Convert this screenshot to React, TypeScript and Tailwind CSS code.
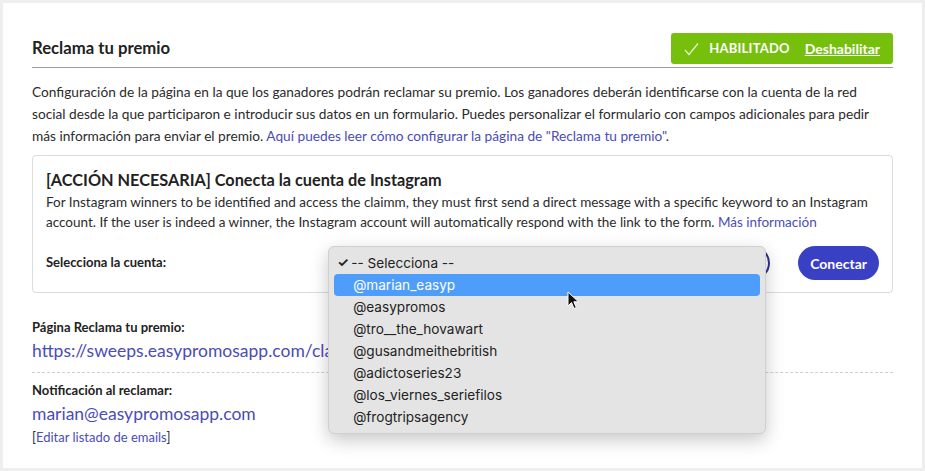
const accounts = [
  '@marian_easyp',
  '@easypromos',
  '@tro__the_hovawart',
  '@gusandmeithebritish',
  '@adictoseries23',
  '@los_viernes_seriefilos',
  '@frogtripsagency',
]

function AccountDropdown() {
  return (
    <div className="absolute left-0 top-0 z-10 w-[438px] rounded-[6px] border border-[#cfcfcf] bg-[#e4e4e4] px-[5px] py-[5px] shadow-[0_6px_18px_rgba(0,0,0,0.22)] font-['Inter',sans-serif] text-[13.6px] text-[#222]">
      <div className="flex h-[22px] items-center gap-[2px] px-[3px]">
        <span className="w-[12px] text-[13px] font-bold">✓</span>
        <span>-- Selecciona --</span>
      </div>
      {accounts.map((a, i) => (
        <div
          key={a}
          className={`flex h-[22px] items-center rounded-[4px] pl-[19px] ${
            i === 0 ? 'bg-[#4f9dfb] text-white' : ''
          }`}
        >
          {a}
        </div>
      ))}
    </div>
  )
}

function Cursor() {
  return (
    <svg className="absolute left-[239px] top-[45px] z-20" width="14" height="20" viewBox="0 0 14 20">
      <path d="M1 1 L1 15 L4.5 11.5 L7 17.5 L9.3 16.5 L6.8 10.8 L11.5 10.8 Z" fill="#111" stroke="#fff" strokeWidth="1" />
    </svg>
  )
}

export default function App() {
  return (
    <div className="w-[925px] h-[471px] bg-[#eeeeee] p-[3px] font-['Lato',sans-serif] text-[#2b2b2b]">
      <div className="h-full bg-white px-[29px] pt-[30px]">
        <div className="flex items-center justify-between border-b border-[#9a9a9a] pb-[3px]">
          <h1 className="text-[16.7px] font-bold text-[#222]">Reclama tu premio</h1>
          <div className="flex h-[31px] items-center rounded-[3px] bg-[#76c00d] pl-[13px] pr-[13px] font-bold text-white">
            <svg width="15" height="14" viewBox="0 0 15 14" fill="none" stroke="#e6f5cf" strokeWidth="1.2">
              <path d="M1 8 L5 12.5 L14 1.5" />
            </svg>
            <span className="ml-[10px] text-[13px] tracking-[0.2px]">HABILITADO</span>
            <a className="ml-[15px] text-[14px] underline">Deshabilitar</a>
          </div>
        </div>

        <p className="mt-[13px] text-[13.7px] leading-[22px]">
          Configuración de la página en la que los ganadores podrán reclamar su premio. Los ganadores deberán
          identificarse con la cuenta de la red social desde la que participaron e introducir sus datos en un
          formulario. Puedes personalizar el formulario con campos adicionales para pedir más información para enviar el
          premio.{' '}
          <a className="text-[#4a4cb8]">Aquí puedes leer cómo configurar la página de "Reclama tu premio"</a>.
        </p>

        <div className="mt-[8px] rounded-[4px] border border-[#dcdcdc] px-[13px] pt-[13px] pb-[12px]">
          <h2 className="text-[16.3px] font-bold leading-[22px] text-[#222]">
            [ACCIÓN NECESARIA] Conecta la cuenta de Instagram
          </h2>
          <p className="mt-[2px] text-[13.5px] leading-[19.5px]">
            For Instagram winners to be identified and access the claimm, they must first send a direct message with a
            specific keyword to an Instagram account. If the user is indeed a winner, the Instagram account will
            automatically respond with the link to the form.{' '}
            <a className="whitespace-nowrap text-[#4a4cb8]">Más información</a>
          </p>
          <div className="mt-[14px] flex items-center">
            <span className="w-[284px] text-[13px] font-bold text-[#222]">Selecciona la cuenta:</span>
            <div className="relative">
              <div className="h-[34px] w-[442px] rounded-full border-2 border-[#2f3192] bg-white" />
              <AccountDropdown />
              <Cursor />
            </div>
            <button className="ml-[28px] h-[34px] rounded-full bg-[#3a40c4] px-[12px] text-[14px] font-bold text-white">
              Conectar
            </button>
          </div>
        </div>

        <div className="mt-[25px] text-[13px] font-bold text-[#222]">Página Reclama tu premio:</div>
        <a className="mt-[2px] block text-[17.5px] leading-[22px] text-[#4a4cb8]">https://sweeps.easypromosapp.com/claim/</a>
        <div className="mt-[10px] border-t border-dashed border-[#cfcfcf]" />
        <div className="mt-[8px] text-[13px] font-bold text-[#222]">Notificación al reclamar:</div>
        <a className="mt-[3px] block text-[17.5px] leading-[22px] text-[#4a4cb8]">marian@easypromosapp.com</a>
        <div className="mt-[3px] text-[13px]">
          [<a className="text-[#4a4cb8]">Editar listado de emails</a>]
        </div>
      </div>
    </div>
  )
}
